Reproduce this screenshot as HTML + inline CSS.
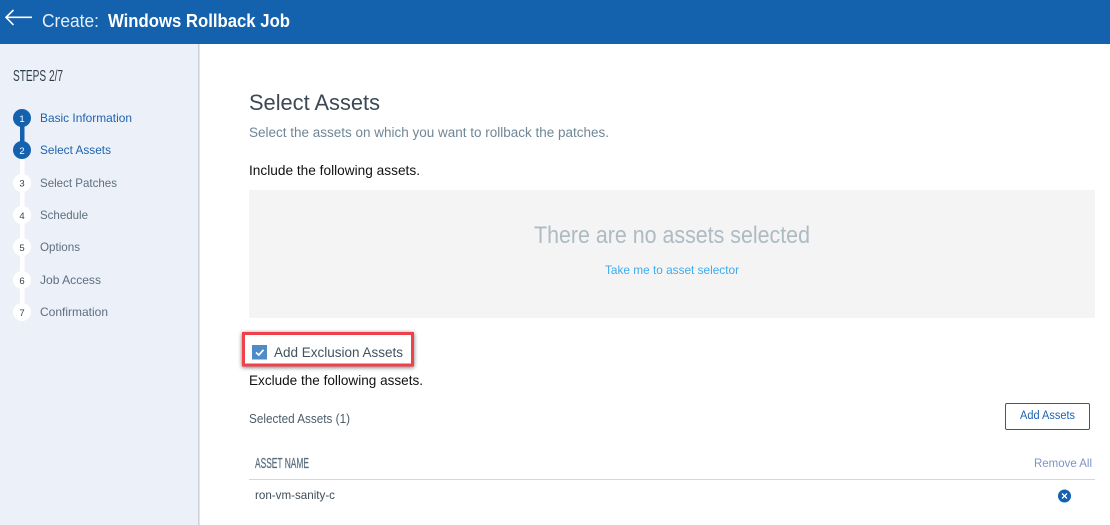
<!DOCTYPE html>
<html>
<head>
<meta charset="utf-8">
<title>Create: Windows Rollback Job</title>
<style>
html,body{margin:0;padding:0;width:1110px;height:525px;overflow:hidden;background:#fff}
svg{display:block;position:absolute;left:0;top:0}
text{font-family:"Liberation Sans",sans-serif}
</style>
</head>
<body>
<svg width="1110" height="525" viewBox="0 0 1110 525" xmlns="http://www.w3.org/2000/svg">
<defs>
<linearGradient id="sh" x1="0" x2="1" y1="0" y2="0"><stop offset="0" stop-color="#c4c8ce"/><stop offset="1" stop-color="#eceef1"/></linearGradient>
<filter id="rs" x="-10%" y="-30%" width="120%" height="160%"><feDropShadow dx="0" dy="1" stdDeviation="2" flood-color="#000" flood-opacity=".55"/></filter>
</defs>
<rect width="1110" height="525" fill="#fff"/>
<!-- sidebar -->
<rect x="0" y="44" width="198" height="481" fill="#ecf1f9"/>
<rect x="198" y="44" width="2" height="481" fill="url(#sh)"/>
<!-- header -->
<rect width="1110" height="44" fill="#1461ae"/>
<path d="M32 17.300H6.500M13.500 10L6 17.300L13.500 25" fill="none" stroke="#fff" stroke-width="1.600"/>
<text x="42" y="27" font-size="18" fill="#e6eef7" textLength="57" lengthAdjust="spacingAndGlyphs">Create:</text>
<text x="108" y="27" font-size="18.500" font-weight="bold" fill="#fff" textLength="182" lengthAdjust="spacingAndGlyphs">Windows Rollback Job</text>
<!-- steps -->
<text x="13" y="81" font-size="16" fill="#2f3d4a" textLength="50" lengthAdjust="spacingAndGlyphs">STEPS 2/7</text>
<rect x="20" y="118" width="4.500" height="194" fill="#fff"/>
<rect x="20" y="118" width="4.500" height="32" fill="#1461ae"/>
<circle cx="22" cy="118" r="9" fill="#1461ae"/>
<circle cx="22" cy="150" r="9" fill="#1461ae"/>
<circle cx="22" cy="183" r="9" fill="#fff"/>
<circle cx="22" cy="215" r="9" fill="#fff"/>
<circle cx="22" cy="247" r="9" fill="#fff"/>
<circle cx="22" cy="280" r="9" fill="#fff"/>
<circle cx="22" cy="312" r="9" fill="#fff"/>
<g font-size="9.500" text-anchor="middle">
<text x="22" y="122" fill="#fff">1</text>
<text x="22" y="154" fill="#fff">2</text>
<text x="22" y="186.500" fill="#3a444d">3</text>
<text x="22" y="219" fill="#3a444d">4</text>
<text x="22" y="251" fill="#3a444d">5</text>
<text x="22" y="284" fill="#3a444d">6</text>
<text x="22" y="316" fill="#3a444d">7</text>
</g>
<g font-size="12">
<text x="40" y="122" fill="#1f62ae" textLength="92" lengthAdjust="spacingAndGlyphs">Basic Information</text>
<text x="40" y="154" fill="#1f62ae" textLength="71" lengthAdjust="spacingAndGlyphs">Select Assets</text>
<text x="40" y="187" fill="#5e6e7e" textLength="77" lengthAdjust="spacingAndGlyphs">Select Patches</text>
<text x="40" y="219" fill="#5e6e7e" textLength="48" lengthAdjust="spacingAndGlyphs">Schedule</text>
<text x="40" y="251" fill="#5e6e7e" textLength="40" lengthAdjust="spacingAndGlyphs">Options</text>
<text x="40" y="284" fill="#5e6e7e" textLength="61" lengthAdjust="spacingAndGlyphs">Job Access</text>
<text x="40" y="316" fill="#5e6e7e" textLength="68" lengthAdjust="spacingAndGlyphs">Confirmation</text>
</g>
<!-- main -->
<text x="249" y="110" font-size="22" fill="#3c4854" textLength="131" lengthAdjust="spacingAndGlyphs">Select Assets</text>
<text x="249" y="137" font-size="13.500" fill="#6f8696" textLength="360" lengthAdjust="spacingAndGlyphs">Select the assets on which you want to rollback the patches.</text>
<text x="249" y="175" font-size="14" fill="#111" textLength="171" lengthAdjust="spacingAndGlyphs">Include the following assets.</text>
<rect x="249" y="190" width="846" height="128" fill="#f4f4f4"/>
<text x="534" y="243" font-size="24" fill="#adbbc3" textLength="276" lengthAdjust="spacingAndGlyphs">There are no assets selected</text>
<text x="605" y="274" font-size="12" fill="#3fabed" textLength="134" lengthAdjust="spacingAndGlyphs">Take me to asset selector</text>
<!-- highlighted checkbox -->
<rect x="243.500" y="333.500" width="169" height="31.500" fill="#fff" stroke="#f0414a" stroke-width="3" filter="url(#rs)"/>
<rect x="252" y="345" width="15" height="14.500" fill="#4d8cc9"/>
<path d="M256 352.500L258.800 355L263.500 349.800" fill="none" stroke="#fff" stroke-width="1.700"/>
<text x="274" y="357" font-size="13.500" fill="#40535f" textLength="129" lengthAdjust="spacingAndGlyphs">Add Exclusion Assets</text>
<text x="249" y="385" font-size="14" fill="#111" textLength="174" lengthAdjust="spacingAndGlyphs">Exclude the following assets.</text>
<text x="249" y="423" font-size="12.500" fill="#4c5c68" textLength="101" lengthAdjust="spacingAndGlyphs">Selected Assets (1)</text>
<rect x="1005.500" y="403.500" width="84" height="26" rx="1.500" fill="#fff" stroke="#1461ae"/>
<text x="1020" y="419" font-size="11.500" fill="#1f62ae" textLength="55" lengthAdjust="spacingAndGlyphs">Add Assets</text>
<text x="255" y="468" font-size="14.500" fill="#5a6f80" stroke="#5a6f80" stroke-width=".25" textLength="54" lengthAdjust="spacingAndGlyphs">ASSET NAME</text>
<text x="1034" y="467" font-size="12" fill="#7d92c8" textLength="58" lengthAdjust="spacingAndGlyphs">Remove All</text>
<rect x="249" y="479" width="846" height="1" fill="#d3d8de"/>
<text x="255" y="499" font-size="12" fill="#3f4c57" textLength="80" lengthAdjust="spacingAndGlyphs">ron-vm-sanity-c</text>
<circle cx="1064.500" cy="496" r="6.500" fill="#1461ae"/>
<path d="M1062 493.500L1067 498.500M1067 493.500L1062 498.500" stroke="#fff" stroke-width="1.300" fill="none"/>
</svg>
</body>
</html>
